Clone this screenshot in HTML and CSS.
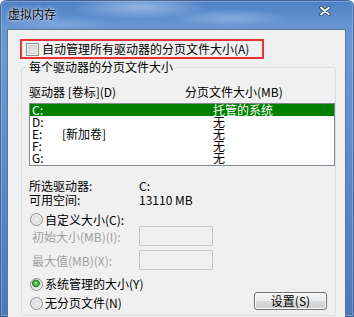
FILE: index.html
```html
<!DOCTYPE html>
<html lang="zh-CN">
<head>
<meta charset="utf-8">
<title>虚拟内存</title>
<link rel="stylesheet" href="styles.css">
</head>
<body>
<div class="window">
  <div class="titlebar">
    <span class="title">虚拟内存</span>
    <svg class="close" width="12" height="10" viewBox="0 0 12 10">
      <path d="M2 1.5 L10 8.5 M10 1.5 L2 8.5" stroke="#2a3a50" stroke-width="3.4" stroke-linecap="round"/>
      <path d="M2 1.5 L10 8.5 M10 1.5 L2 8.5" stroke="#ffffff" stroke-width="1.8" stroke-linecap="round"/>
    </svg>
  </div>
  <div class="client">
    <div class="auto-box">
      <span class="checkbox"></span>
      <span>自动管理所有驱动器的分页文件大小(A)</span>
    </div>
    <div class="group">
      <div class="group-title">每个驱动器的分页文件大小</div>
      <div class="col-head"><span>驱动器 [卷标](D)</span><span>分页文件大小(MB)</span></div>
      <div class="list">
        <div class="row sel"><span>C:</span><span></span><span>托管的系统</span></div>
        <div class="row"><span>D:</span><span></span><span>无</span></div>
        <div class="row"><span>E:</span><span>[新加卷]</span><span>无</span></div>
        <div class="row"><span>F:</span><span></span><span>无</span></div>
        <div class="row"><span>G:</span><span></span><span>无</span></div>
      </div>
      <div class="info">
        <span>所选驱动器:</span><span>C:</span>
        <span>可用空间:</span><span>13110 MB</span>
      </div>
      <div class="radio-row custom"><span class="radio"></span><span>自定义大小(C):</span></div>
      <div class="size-row"><span class="dim">初始大小(MB)(I):</span><span class="textbox"></span></div>
      <div class="size-row second"><span class="dim">最大值(MB)(X):</span><span class="textbox"></span></div>
      <div class="radio-row sys"><span class="radio checked"></span><span>系统管理的大小(Y)</span></div>
      <div class="last-row">
        <div class="radio-row"><span class="radio"></span><span>无分页文件(N)</span></div>
        <button class="btn">设置(S)</button>
      </div>
    </div>
    <div class="group group2">
      <div class="group-title">所有驱动器分页文件大小的总数</div>
    </div>
  </div>
</div>
</body>
</html>
```

FILE: styles.css
```css
html, body {
  margin: 0;
  padding: 0;
}
body {
  width: 354px;
  height: 317px;
  overflow: hidden;
  font-family: "Noto Sans CJK SC", "Noto Sans", sans-serif;
  font-size: 12px;
  color: #000;
}
.window {
  width: 354px;
  height: 317px;
  display: flex;
  flex-direction: column;
  border-radius: 6px 6px 0 0;
  overflow: hidden;
  box-sizing: border-box;
  background:
    radial-gradient(ellipse 70px 12px at 140px 7px, rgba(200, 222, 248, 0.55), transparent),
    radial-gradient(ellipse 60px 9px at 230px 18px, rgba(180, 208, 242, 0.45), transparent),
    radial-gradient(ellipse 50px 8px at 60px 24px, rgba(170, 200, 240, 0.35), transparent),
    linear-gradient(180deg, #4d7fc4 0, #6896d2 27px, #6b98d3 60px, #5b88c8 180px, #4a78c0 317px);
  box-shadow: inset 0 0 0 1px rgba(30, 50, 90, 0.55), inset 0 0 0 2px rgba(200, 220, 245, 0.35);
}
.titlebar {
  height: 29px;
  flex: none;
  display: flex;
  align-items: center;
  justify-content: space-between;
  padding: 0 23px 2px 8px;
  box-sizing: border-box;
}
.title {
  font-size: 12px;
  line-height: 14px;
  color: #000;
  text-shadow: 0 0 5px rgba(255, 255, 255, 0.9), 0 0 2px rgba(255, 255, 255, 0.8);
}
.close {
  display: block;
  margin-bottom: 6px;
}
.client {
  flex: 1;
  margin: 0 8px 0 7px;
  background: #f0f0f0;
  border: 1px solid #5f7797;
  border-bottom: 0;
  overflow: hidden;
}
.auto-box {
  width: 244px;
  height: 20px;
  box-sizing: border-box;
  margin: 9px 0 0 12px;
  border: 2px solid #e8323a;
  display: flex;
  align-items: center;
  padding-left: 4px;
  gap: 3px;
  line-height: 14px;
  white-space: nowrap;
}
.checkbox {
  width: 13px;
  height: 13px;
  box-sizing: border-box;
  border: 1px solid #8e8f8f;
  background: linear-gradient(135deg, #c9c9c9, #f6f6f6);
  box-shadow: inset 0 0 0 1px #f2f2f2, inset 0 0 0 2px #d4d4d4;
  flex: none;
}
.group {
  width: 315px;
  box-sizing: border-box;
  margin: 8px 0 0 13px;
  border: 1px solid #d5dfe5;
  border-radius: 3px;
  padding: 0 0 5px 7px;
}
.group-title {
  display: inline-block;
  line-height: 12px;
  margin: -7px 0 0 -2px;
  padding: 0 2px;
  background: #f0f0f0;
  vertical-align: top;
  white-space: nowrap;
}
.col-head {
  display: grid;
  grid-template-columns: 156px 1fr;
  line-height: 12px;
  margin-top: 1px;
  white-space: nowrap;
}
.list {
  width: 306px;
  height: 63px;
  box-sizing: border-box;
  margin-top: 5px;
  border: 1px solid #828790;
  background: #fff;
  padding: 0;
}
.row {
  display: grid;
  grid-template-columns: 30px 151px 1fr;
  height: 12px;
  line-height: 12px;
  padding-left: 2px;
  white-space: nowrap;
}
.row.sel {
  background: #008000;
  color: #fff;
}
.info {
  display: grid;
  grid-template-columns: 110px 1fr;
  line-height: 14px;
  margin-top: 13px;
}
.radio-row {
  display: flex;
  align-items: center;
  gap: 2px;
  line-height: 14px;
  padding-left: 1px;
  white-space: nowrap;
}
.radio-row.custom {
  margin-top: 6px;
  line-height: 12px;
}
.radio {
  width: 13px;
  height: 13px;
  box-sizing: border-box;
  border-radius: 50%;
  border: 1px solid #8e8f8f;
  background: radial-gradient(circle at 50% 50%, #f4f4f4 0, #dedede 3px, #e9e9e9 5px, #f7f7f7 100%);
  flex: none;
}
.radio.checked {
  background: radial-gradient(circle at 45% 40%, #b8f5a8 0, #46b346 2px, #1e861e 3.5px, #e3e3e3 4.2px, #f4f4f4 100%);
}
.size-row {
  display: grid;
  grid-template-columns: 107px 74px;
  align-items: center;
  padding-left: 3px;
  height: 20px;
}
.size-row.second {
  margin-top: 4px;
}
.dim {
  color: #a0a0a0;
  white-space: nowrap;
}
.textbox {
  height: 20px;
  box-sizing: border-box;
  border: 1px solid #c4c4c4;
  border-radius: 2px;
  background: #f0f0f0;
}
.radio-row.sys {
  margin-top: 7px;
}
.last-row {
  display: flex;
  justify-content: space-between;
  align-items: flex-end;
  margin-top: 1px;
  padding-right: 8px;
}
.btn {
  width: 73px;
  height: 18px;
  box-sizing: border-box;
  margin: 0;
  padding: 0;
  font: inherit;
  line-height: 14px;
  color: #000;
  border: 1px solid #707070;
  border-radius: 3px;
  background: linear-gradient(180deg, #f4f4f4 0, #ececec 48%, #dcdcdc 52%, #cfcfcf 100%);
  box-shadow: inset 0 0 0 1px #fcfcfc;
}
.group2 {
  margin-top: 10px;
  height: 30px;
}
```
